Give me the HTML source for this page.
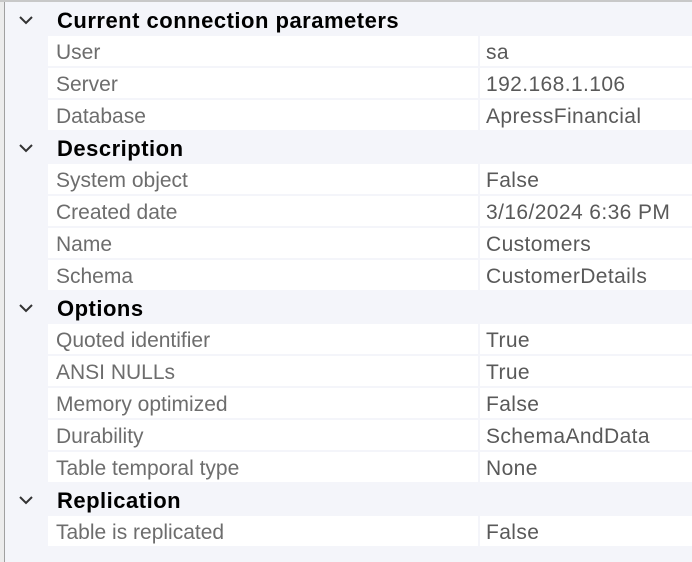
<!DOCTYPE html>
<html><head><style>
body{margin:0;width:692px;height:562px;overflow:hidden;background:#f4f5fa;font-family:"Liberation Sans",sans-serif;position:relative}
.lb{position:absolute;left:0;top:0;width:4px;height:562px;background:#ececec;border-right:1px solid #a0a0a0}
.tb{position:absolute;left:0;top:0;width:692px;height:2px;background:#c8c8c8}
.g{position:absolute;left:5px;width:687px;height:32px}
.h{font-weight:bold;font-size:22px;letter-spacing:0.5px;color:#000;line-height:34px}
.h span{position:absolute;left:52px}
.h svg{position:absolute;left:13px;top:10px}
.r{background:#fff;left:48px;width:644px;height:30px;font-size:21px;line-height:33px;color:#6d6d6d}
.r .n{position:absolute;left:8px}
.r .v{position:absolute;left:438px;color:#595959;letter-spacing:0.4px}
.r .s{position:absolute;left:430px;top:0;width:2px;height:30px;background:#f4f5fa}
</style></head><body>
<div class="lb"></div><div class="tb"></div>
<div class="g h" style="top:4px"><svg width="16" height="12"><path d="M2 3 L8 9 L14 3" stroke="#333" stroke-width="2" fill="none"/></svg><span>Current connection parameters</span></div>
<div class="g r" style="top:36px"><span class="n">User</span><i class="s"></i><span class="v">sa</span></div>
<div class="g r" style="top:68px"><span class="n">Server</span><i class="s"></i><span class="v">192.168.1.106</span></div>
<div class="g r" style="top:100px"><span class="n">Database</span><i class="s"></i><span class="v">ApressFinancial</span></div>
<div class="g h" style="top:132px"><svg width="16" height="12"><path d="M2 3 L8 9 L14 3" stroke="#333" stroke-width="2" fill="none"/></svg><span>Description</span></div>
<div class="g r" style="top:164px"><span class="n">System object</span><i class="s"></i><span class="v">False</span></div>
<div class="g r" style="top:196px"><span class="n">Created date</span><i class="s"></i><span class="v">3/16/2024 6:36 PM</span></div>
<div class="g r" style="top:228px"><span class="n">Name</span><i class="s"></i><span class="v">Customers</span></div>
<div class="g r" style="top:260px"><span class="n">Schema</span><i class="s"></i><span class="v">CustomerDetails</span></div>
<div class="g h" style="top:292px"><svg width="16" height="12"><path d="M2 3 L8 9 L14 3" stroke="#333" stroke-width="2" fill="none"/></svg><span>Options</span></div>
<div class="g r" style="top:324px"><span class="n">Quoted identifier</span><i class="s"></i><span class="v">True</span></div>
<div class="g r" style="top:356px"><span class="n">ANSI NULLs</span><i class="s"></i><span class="v">True</span></div>
<div class="g r" style="top:388px"><span class="n">Memory optimized</span><i class="s"></i><span class="v">False</span></div>
<div class="g r" style="top:420px"><span class="n">Durability</span><i class="s"></i><span class="v">SchemaAndData</span></div>
<div class="g r" style="top:452px"><span class="n">Table temporal type</span><i class="s"></i><span class="v">None</span></div>
<div class="g h" style="top:484px"><svg width="16" height="12"><path d="M2 3 L8 9 L14 3" stroke="#333" stroke-width="2" fill="none"/></svg><span>Replication</span></div>
<div class="g r" style="top:516px"><span class="n">Table is replicated</span><i class="s"></i><span class="v">False</span></div>
</body></html>
